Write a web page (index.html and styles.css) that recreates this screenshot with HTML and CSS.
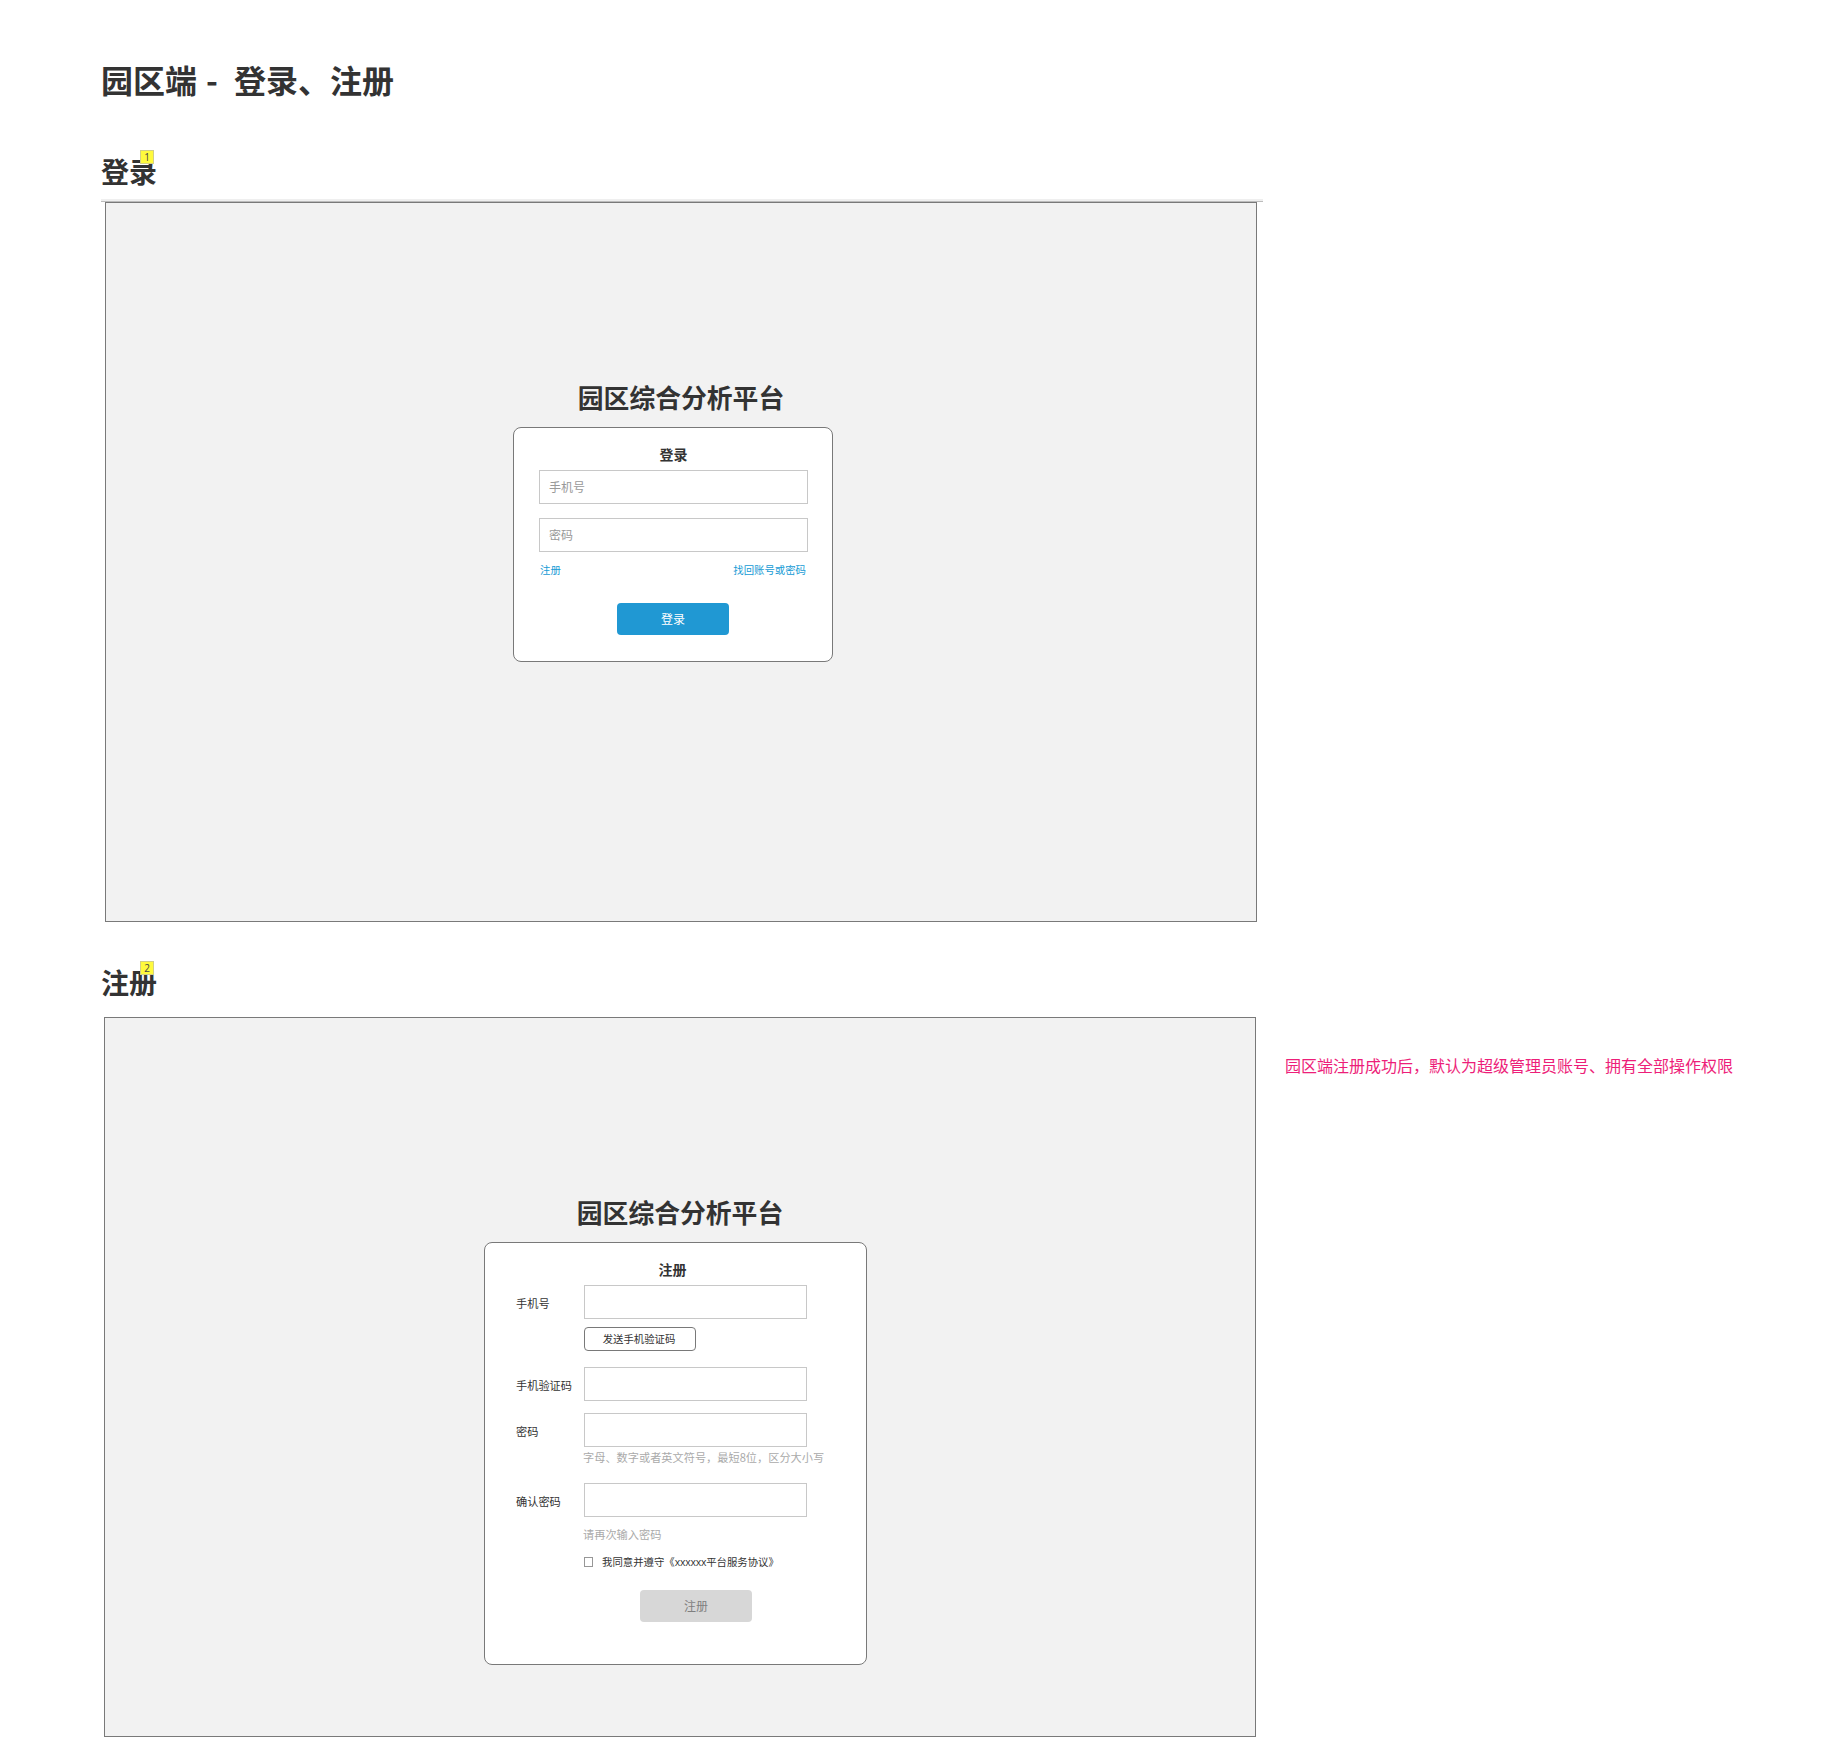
FILE: index.html
```html
<!DOCTYPE html>
<html lang="zh-CN">
<head>
<meta charset="utf-8">
<title>园区端 - 登录、注册</title>
<link rel="stylesheet" href="styles.css">
</head>
<body>
<main class="page">
  <h1 class="page-title"><span>园区端</span><span class="dash">-</span><span>登录、注册</span></h1>

  <section class="login-section">
    <h2 class="section-title">登录<span class="note-badge">1</span></h2>
    <div class="rule"></div>
    <div class="frame frame-login">
      <div class="platform-title">园区综合分析平台</div>
      <form class="card login-card">
        <h3 class="card-title">登录</h3>
        <div class="input">手机号</div>
        <div class="input">密码</div>
        <div class="links"><a>注册</a><a>找回账号或密码</a></div>
        <button class="button primary" type="button">登录</button>
      </form>
    </div>
  </section>

  <section class="register-section">
    <h2 class="section-title">注册<span class="note-badge">2</span></h2>
    <div class="register-row">
      <div class="frame frame-register">
        <div class="platform-title">园区综合分析平台</div>
        <form class="card register-card">
          <h3 class="card-title">注册</h3>
          <div class="field"><label>手机号</label><div class="input"></div></div>
          <button class="button send-code" type="button">发送手机验证码</button>
          <div class="field code-field"><label>手机验证码</label><div class="input"></div></div>
          <div class="field password-field"><label>密码</label><div class="input"></div></div>
          <p class="hint">字母、数字或者英文符号，最短8位，区分大小写</p>
          <div class="field confirm-field"><label>确认密码</label><div class="input"></div></div>
          <p class="hint confirm-hint">请再次输入密码</p>
          <div class="agreement"><span class="checkbox"></span><span>我同意并遵守《<span class="latin">xxxxxx</span>平台服务协议》</span></div>
          <button class="button disabled" type="button">注册</button>
        </form>
      </div>
      <p class="remark">园区端注册成功后，默认为超级管理员账号、拥有全部操作权限</p>
    </div>
  </section>
</main>
</body>
</html>
```
FILE: styles.css
```css
* { box-sizing: border-box; margin: 0; padding: 0; }

body {
  background: #fff;
  color: #333;
  font-family: "Noto Sans CJK SC", sans-serif;
}

.page { height: 1742px; padding: 63px 0 0 101px; }

.page-title { display: flex; font-size: 32px; line-height: 32px; font-weight: 700; white-space: nowrap; }
.dash { width: 37px; padding-left: 9px; }

.login-section { margin-top: 62px; }
.register-section { margin-top: 46px; }

.section-title { position: relative; width: 56px; font-size: 28px; line-height: 28px; font-weight: 700; white-space: nowrap; }

.note-badge {
  position: absolute;
  left: 39px;
  top: -7px;
  width: 14px;
  height: 14px;
  border: 1px solid #d2cf86;
  background: #fffa3c;
  color: #444;
  font: 400 10px/12px "Open Sans", sans-serif;
  text-align: center;
}

.rule { width: 1162px; height: 3px; margin-top: 14px; background: #efefef; border-bottom: 1px solid #bcbcbc; }

.frame {
  display: flex;
  flex-direction: column;
  width: 1152px;
  height: 720px;
  padding-top: 181px;
  border: 1px solid #797979;
  background: #f2f2f2;
}
.frame-login { margin-left: 4px; }
.frame-register { flex: none; margin-left: 3px; }

.platform-title { font-size: 25.8px; line-height: 26px; font-weight: 700; text-align: center; }

.card { border: 1px solid #797979; border-radius: 8px; background: #fff; font-size: 12px; }
.card-title { font-size: 14px; line-height: 14px; font-weight: 700; text-align: center; }

.input {
  height: 34px;
  padding-left: 9px;
  border: 1px solid #c8c8c8;
  background: #fff;
  color: #999;
  font-size: 12px;
  line-height: 32px;
}

.button {
  display: block;
  width: 112px;
  height: 32px;
  border: 0;
  border-radius: 4px;
  font-family: inherit;
  font-size: 12px;
  line-height: 32px;
}

.login-card { width: 320px; height: 235px; margin: 17px 0 0 407px; padding: 19px 24px 0 25px; }
.login-card .card-title { margin-bottom: 9px; }
.login-card .input + .input { margin-top: 14px; }
.links { display: flex; justify-content: space-between; margin-top: 10px; padding: 0 2px 0 1px; color: #169bd5; font-size: 10.4px; line-height: 16px; }
.primary { margin: 25px 0 0 78px; background: #2098d3; color: #fff; }

.register-row { display: flex; margin-top: 21px; }
.register-card { width: 383px; height: 423px; margin: 17px 0 0 379px; padding: 19px 0 0 31px; }
.register-card .card-title { width: 313px; margin-bottom: 9px; }
.field { display: grid; grid-template-columns: 68px 223px; align-items: center; font-size: 11.2px; line-height: 16px; }
.field label { padding-top: 2px; }
.send-code { height: 24px; margin: 8px 0 0 68px; padding-right: 2px; border: 1px solid #797979; background: #fff; color: #333; font-size: 10.4px; line-height: 22px; }
.code-field { margin-top: 16px; }
.password-field { margin-top: 12px; }
.hint { margin: 2px 0 0 67px; color: #aaa; font-size: 11.2px; line-height: 16px; white-space: nowrap; }
.confirm-field { margin-top: 18px; }
.confirm-hint { margin-top: 9px; }
.agreement { display: flex; align-items: center; gap: 9px; margin: 12px 0 0 68px; font-size: 10.4px; line-height: 16px; white-space: nowrap; }
.checkbox { width: 9px; height: 10px; border: 1px solid #979797; background: #fff; }
.latin { font-family: "Open Sans", sans-serif; letter-spacing: -0.2px; }
.disabled { margin: 20px 0 0 124px; background: #d7d7d7; color: #7f7f7f; }

.remark { margin: 36px 0 0 29px; color: #ed1e79; font-size: 16px; line-height: 24px; white-space: nowrap; }
```
